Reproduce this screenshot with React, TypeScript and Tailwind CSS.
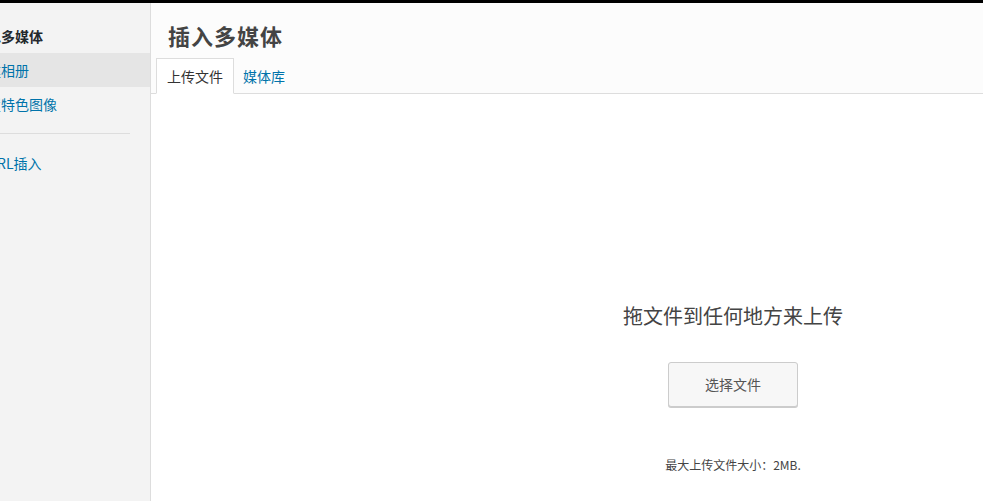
const font = {
  fontFamily: '"Noto Sans CJK SC", "Liberation Sans", sans-serif',
};

function Sidebar() {
  return (
    <div className="w-[198px] ml-[-47px] shrink-0 bg-[#f3f3f3] border-r border-[#dddddd] pt-[19px]">
      <div className="px-5 text-[14px] font-bold text-[#23282d] leading-[28px]">
        插入多媒体
      </div>
      <div className="mt-[3px] px-5 py-[3px] bg-[#e5e5e5] text-[14px] text-[#0073aa] leading-[28px]">
        创建相册
      </div>
      <div className="px-5 py-[3px] text-[14px] text-[#0073aa] leading-[28px]">
        设置特色图像
      </div>
      <div className="mx-5 my-[12px] h-px bg-[#dddddd]" />
      <div className="px-5 py-[3px] text-[14px] text-[#0073aa] leading-[28px]">
        从URL插入
      </div>
    </div>
  );
}

function Header() {
  return (
    <div className="bg-[#fcfcfc] border-b border-[#dddddd]">
      <h1 className="pl-[17px] pt-[16px] text-[22px] font-semibold text-[#444444] leading-[32px] tracking-[1px]">
        插入多媒体
      </h1>
      <div className="flex pl-[5px] mt-[7px] mb-[-1px]">
        <div className="px-[10px] h-[36px] flex items-center bg-white border border-[#dddddd] border-b-white text-[14px] text-[#333333]">
          上传文件
        </div>
        <div className="px-[9px] h-[36px] flex items-center text-[14px] text-[#0073aa]">
          媒体库
        </div>
      </div>
    </div>
  );
}

function Uploader() {
  return (
    <div className="flex-1 bg-white flex flex-col items-center pt-[207px]">
      <p className="text-[20px] text-[#444444] leading-[30px]">拖文件到任何地方来上传</p>
      <button className="mt-[31px] w-[130px] h-[45px] bg-[#f7f7f7] border border-[#cccccc] rounded-[3px] shadow-[0_1px_0_#cccccc] text-[14px] text-[#555555]">
        选择文件
      </button>
      <p className="mt-[49px] text-[12px] text-[#444444]">最大上传文件大小：2MB.</p>
    </div>
  );
}

export default function App() {
  return (
    <div className="w-[983px] h-[501px] overflow-hidden bg-black" style={font}>
      <div className="mt-[3px] h-[498px] flex">
        <Sidebar />
        <div className="w-[1164px] shrink-0 flex flex-col">
          <Header />
          <Uploader />
        </div>
      </div>
    </div>
  );
}
